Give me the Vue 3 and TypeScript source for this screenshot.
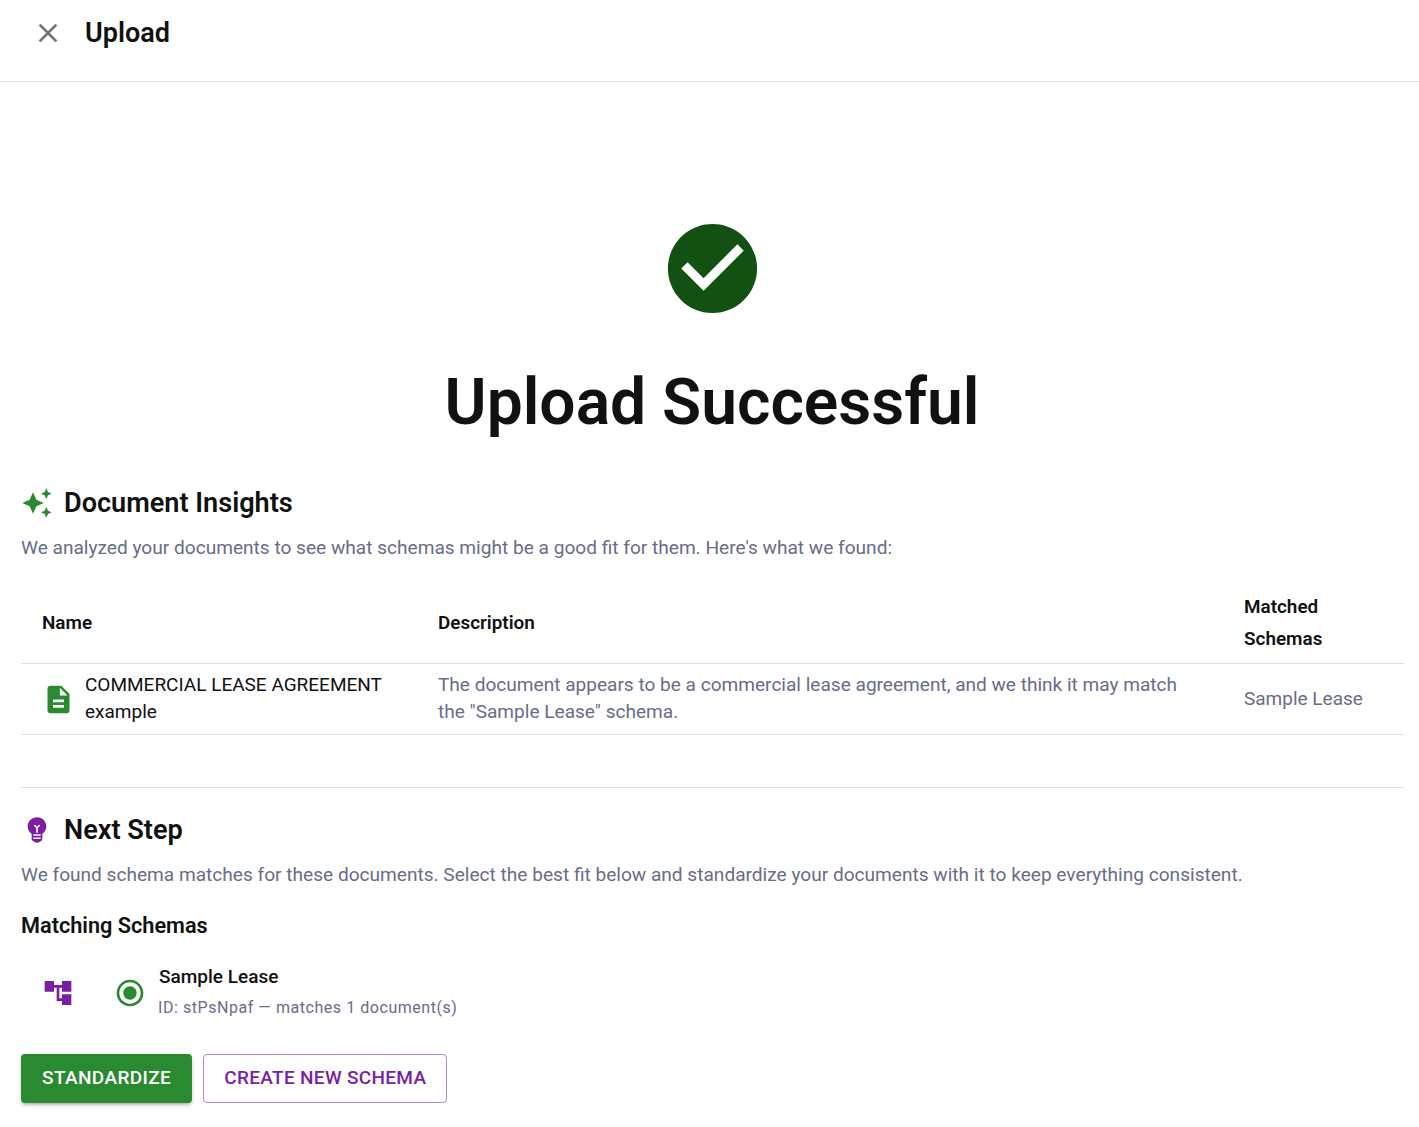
<script setup lang="ts">
const title = 'Upload Successful'
</script>

<template>
  <div class="page">
    <header class="top">
      <svg class="close" width="32" height="32" viewBox="0 0 24 24"><path fill="#757575" d="M19 6.41 17.59 5 12 10.59 6.41 5 5 6.41 10.59 12 5 17.59 6.41 19 12 13.41 17.59 19 19 17.59 13.41 12z"/></svg>
      <span class="top-title">Upload</span>
    </header>

    <section class="hero">
      <svg class="big-check" width="107" height="107" viewBox="0 0 24 24"><path fill="#135112" d="M12 2C6.48 2 2 6.48 2 12s4.480 10 10 10 10-4.480 10-10S17.520 2 12 2zm-2 15-5-5 1.410-1.410L10 14.170l7.590-7.590L19 8l-9 9z"/></svg>
      <h1>{{ title }}</h1>
    </section>

    <main class="content">
      <div class="heading">
        <span class="hicon">
          <svg width="32" height="32" viewBox="0 0 24 24"><path fill="#2a8a2f" d="M19 9l1.250-2.750L23 5l-2.750-1.250L19 1l-1.250 2.750L15 5l2.750 1.250L19 9zm-7.500.5L9 4 6.500 9.500 1 12l5.500 2.500L9 20l2.500-5.500L17 12l-5.500-2.500zM19 15l-1.250 2.750L15 19l2.750 1.250L19 23l1.250-2.750L23 19l-2.750-1.250L19 15z"/></svg>
        </span>
        <h2>Document Insights</h2>
      </div>
      <p class="sub">We analyzed your documents to see what schemas might be a good fit for them. Here's what we found:</p>

      <div class="table">
        <div class="row head">
          <div class="c1">Name</div>
          <div class="c2">Description</div>
          <div class="c3">Matched Schemas</div>
        </div>
        <div class="row body">
          <div class="c1 namecell">
            <svg width="33" height="33" viewBox="0 0 24 24"><path fill="#2a8a2f" d="M14 2H6c-1.100 0-1.990.9-1.990 2L4 20c0 1.100.89 2 1.990 2H18c1.100 0 2-.9 2-2V8l-6-6zm2 16H8v-2h8v2zm0-4H8v-2h8v2zm-3-5V3.500L18.500 9H13z"/></svg>
            <span>COMMERCIAL LEASE AGREEMENT example</span>
          </div>
          <div class="c2 muted desc">The document appears to be a commercial lease agreement, and we think it may match the "Sample Lease" schema.</div>
          <div class="c3 muted">Sample Lease</div>
        </div>
      </div>

      <hr class="rule" />

      <div class="heading next">
        <span class="hicon">
          <svg width="32" height="32" viewBox="0 0 24 24"><path fill="#7b1fa2" d="M12 2.500C8.140 2.500 5 5.500 5 9.300c0 2.400 1.200 4.400 3 5.600V19c0 .5.300.9.800 1.100l1.700 1.100c.9.500 2.100.5 3 0l1.700-1.100c.5-.2.800-.6.800-1.100v-4.100c1.800-1.200 3-3.200 3-5.600 0-3.800-3.140-6.800-7-6.800z"/><path fill="none" stroke="#fff" stroke-width="1.200" d="M10 8.300 12 10.300l2-2M12 10.300V14M9.200 15.800h5.600M9.200 18.200h5.600"/></svg>
        </span>
        <h2>Next Step</h2>
      </div>
      <p class="sub">We found schema matches for these documents. Select the best fit below and standardize your documents with it to keep everything consistent.</p>

      <h3>Matching Schemas</h3>
      <div class="schema">
        <svg class="tree" width="32" height="32" viewBox="0 0 24 24"><path fill="#7b1fa2" d="M22 11V3h-7v3H9V3H2v8h7V8h2v10h4v3h7v-8h-7v3h-2V8h2v3z"/></svg>
        <svg class="radio" width="32" height="32" viewBox="0 0 24 24"><path fill="#2a8a2f" d="M12 7c-2.760 0-5 2.240-5 5s2.240 5 5 5 5-2.240 5-5-2.240-5-5-5zm0-5C6.480 2 2 6.480 2 12s4.480 10 10 10 10-4.480 10-10S17.520 2 12 2zm0 18c-4.420 0-8-3.580-8-8s3.580-8 8-8 8 3.580 8 8-3.580 8-8 8z"/></svg>
        <div class="schema-text">
          <div class="schema-name">Sample Lease</div>
          <div class="schema-id">ID: stPsNpaf — matches 1 document(s)</div>
        </div>
      </div>

      <div class="actions">
        <button class="btn primary">STANDARDIZE</button>
        <button class="btn outline">CREATE NEW SCHEMA</button>
      </div>
    </main>
  </div>
</template>

<style>
html, body { margin: 0; background: #fff; }
</style>

<style scoped>
.page {
  width: 1419px;
  height: 1127px;
  overflow: hidden;
  background: #fff;
  font-family: Roboto, "Liberation Sans", sans-serif;
  color: #111;
}
.top {
  height: 81px;
  border-bottom: 1px solid #e0e0e0;
  display: flex;
  align-items: flex-start;
  padding-left: 32px;
}
.close { margin-top: 17px; }
.top-title {
  margin-left: 21px;
  margin-top: 17px;
  font-size: 27px;
  line-height: 32px;
  font-weight: 600;
  color: #111;
}
.hero {
  display: flex;
  flex-direction: column;
  align-items: center;
  padding-top: 133px;
  padding-left: 5px;
}
.big-check { display: block; }
h1 {
  margin: 36px 0 0;
  font-size: 64.1px;
  line-height: 90px;
  font-weight: 600;
  color: #111;
}
.content { padding: 0 15px 0 21px; }
.heading {
  display: flex;
  align-items: center;
  height: 40px;
  margin-top: 35px;
}
.heading.next { margin-top: 22px; }
.hicon { width: 43px; display: flex; align-items: center; }
h2 {
  margin: 0;
  font-size: 27.1px;
  line-height: 40px;
  font-weight: 600;
  color: #111;
}
.sub {
  margin: 11px 0 0;
  font-size: 19.1px;
  line-height: 28px;
  color: #696c8a;
}
.table { margin-top: 20px; font-size: 19px; }
.row { display: grid; grid-template-columns: 396px 806px 1fr; border-bottom: 1px solid #e0e0e0; }
.row > div { padding-left: 21px; padding-right: 21px; }
.head { font-weight: 600; font-size: 18.9px; line-height: 32px; padding: 9px 0 8px; align-items: center; }
.body { height: 70px; box-sizing: content-box; align-items: center; line-height: 27px; }
.body > div { margin-top: -2px; }
.namecell { display: flex; align-items: center; gap: 10px; color: #111; }
.namecell svg { flex: none; margin-top: 2px; }
.muted { color: #696c8a; }
.desc { font-size: 19.07px; }
.rule { border: 0; border-top: 1px solid #e0e0e0; margin: 52px 0 0; }
h3 {
  margin: 21px 0 0;
  font-size: 21.7px;
  line-height: 32px;
  font-weight: 600;
  color: #111;
}
.schema { display: flex; align-items: center; height: 64px; margin-top: 19px; padding-left: 21px; }
.tree { flex: none; }
.radio { margin-left: 40px; flex: none; }
.schema-text { margin-left: 13px; }
.schema-name { font-size: 19px; line-height: 28px; font-weight: 500; color: #111; margin-top: -1px; }
.schema-id { font-size: 16px; line-height: 28px; letter-spacing: .55px; color: #696c8a; margin-top: 3px; margin-left: -1px; }
.actions { display: flex; gap: 11px; margin-top: 29px; }
.btn {
  height: 49px;
  font-family: inherit;
  font-size: 19px;
  font-weight: 500;
  border-radius: 4px;
  padding: 0 21px 2px;
  cursor: pointer;
  letter-spacing: .38px;
}
.primary { background: #2a8a2f; color: #fff; border: 0; box-shadow: 0 3px 3px -2px rgba(0,0,0,.2), 0 2px 4px rgba(0,0,0,.2); }
.outline { background: #fff; color: #7b1fa2; border: 1px solid #b388c9; padding: 0 20px 2px; letter-spacing: .32px; }
</style>
